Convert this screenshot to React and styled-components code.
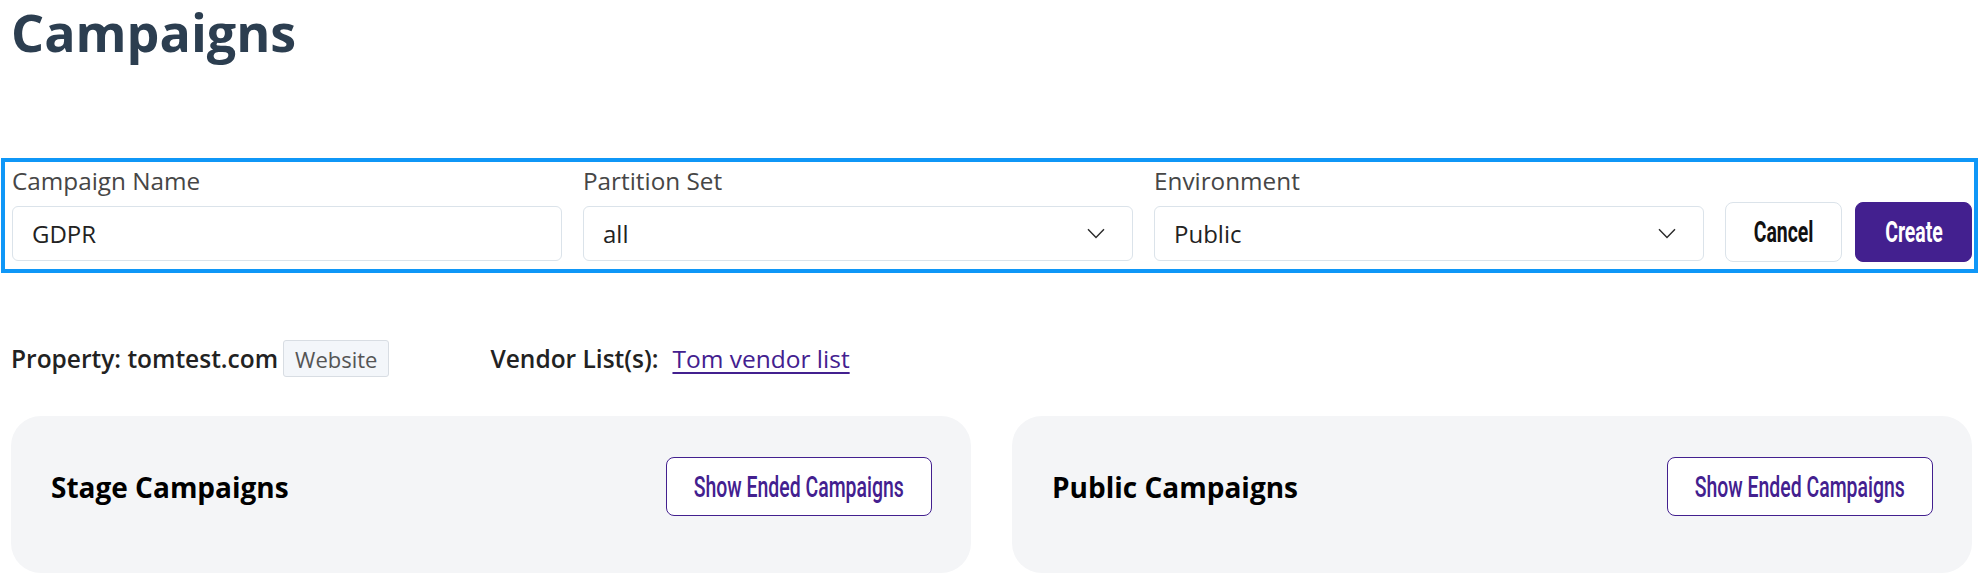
import React from 'react'
import styled, { createGlobalStyle } from 'styled-components'

const purple = '#43208f'
const condensed = `"Roboto", "Liberation Sans", sans-serif`

const GlobalStyle = createGlobalStyle`
    html, body {
        margin: 0;
        padding: 0;
        background: #fff;
        font-family: "Open Sans", "Noto Sans", sans-serif;
        color: #222;
    }
    * { box-sizing: border-box; }
`

const Page = styled.div`
    padding: 0 11px;
    width: 1983px;
`

const Title = styled.h1`
    margin: 0;
    font-size: 52px;
    line-height: 64px;
    font-weight: 700;
    color: #2c3e50;
`

const FormRow = styled.div`
    display: flex;
    align-items: flex-end;
    gap: 21px;
    margin: 94px -6px 0 -10px;
    padding: 2px 2px 8px 7px;
    border: 4px solid #0f97f7;
`

const Field = styled.label`
    flex: 1;
    display: flex;
    flex-direction: column;
    gap: 8px;
    min-width: 0;
`

const FieldLabel = styled.span`
    font-size: 24.3px;
    line-height: 34px;
    color: #464646;
`

const Box = styled.div`
    height: 55px;
    display: flex;
    align-items: center;
    justify-content: space-between;
    padding: 0 27px 0 19px;
    border: 1px solid #dbe3ea;
    border-radius: 6px;
    font-size: 24px;
    color: #222;
    background: #fff;
`

const Chevron = () => (
    <svg width="18" height="11" viewBox="0 0 18 11" fill="none">
        <path d="M1 1.2 L9 9.5 L17 1.2" stroke="#2a2a2a" strokeWidth="1.4" />
    </svg>
)

const Actions = styled.div`
    display: flex;
    gap: 13px;
    margin-bottom: -1px;
`

// squeezed text stands in for the condensed face of the original
const Squeeze = styled.span`
    display: inline-block;
    transform: scaleX(0.67);
    white-space: nowrap;
`

const Button = styled.button`
    width: 117px;
    height: 60px;
    display: flex;
    align-items: center;
    justify-content: center;
    padding: 0;
    border-radius: 8px;
    border: 1px solid ${p => (p.primary ? purple : '#dbe3ea')};
    background: ${p => (p.primary ? purple : '#fff')};
    color: ${p => (p.primary ? '#fff' : '#111')};
    font-family: ${condensed};
    font-weight: 700;
    font-size: 29px;
    cursor: pointer;
`

const InfoRow = styled.div`
    display: flex;
    align-items: center;
    margin-top: 67px;
    height: 37px;
    font-size: 24.5px;
    line-height: 34px;
`

const Strong = styled.span`
    font-weight: 600;
    color: #222;
`

const Badge = styled.span`
    display: inline-flex;
    align-items: center;
    height: 37px;
    margin: 0 101px 0 5px;
    padding: 0 11px;
    background: #f3f6fa;
    border: 1px solid #d8dde3;
    border-radius: 3px;
    font-size: 22px;
    color: #555;
`

const VendorLink = styled.a`
    margin-left: 14px;
    color: ${purple};
    text-decoration: underline;
    text-underline-offset: 4px;
`

const Cards = styled.div`
    display: grid;
    grid-template-columns: 1fr 1fr;
    gap: 41px;
    margin-top: 39px;
`

const Card = styled.section`
    display: flex;
    align-items: center;
    justify-content: space-between;
    padding: 41px 39px 57px 40px;
    background: #f4f5f7;
    border-radius: 30px;
`

const CardTitle = styled.h2`
    margin: 0;
    font-size: 28px;
    font-weight: 700;
    color: #000;
`

const OutlineButton = styled.button`
    width: 266px;
    height: 59px;
    display: flex;
    align-items: center;
    justify-content: center;
    padding: 0;
    background: #fff;
    border: 1px solid ${purple};
    border-radius: 8px;
    color: ${purple};
    font-family: ${condensed};
    font-weight: 500;
    font-size: 29px;
    cursor: pointer;
`

const App = () => (
    <Page>
        <GlobalStyle />
        <Title>Campaigns</Title>

        <FormRow>
            <Field>
                <FieldLabel>Campaign Name</FieldLabel>
                <Box>GDPR</Box>
            </Field>
            <Field>
                <FieldLabel>Partition Set</FieldLabel>
                <Box>all<Chevron /></Box>
            </Field>
            <Field>
                <FieldLabel>Environment</FieldLabel>
                <Box>Public<Chevron /></Box>
            </Field>
            <Actions>
                <Button><Squeeze>Cancel</Squeeze></Button>
                <Button primary><Squeeze>Create</Squeeze></Button>
            </Actions>
        </FormRow>

        <InfoRow>
            <Strong>Property: tomtest.com</Strong>
            <Badge>Website</Badge>
            <Strong>Vendor List(s):</Strong>
            <VendorLink href="#">Tom vendor list</VendorLink>
        </InfoRow>

        <Cards>
            <Card>
                <CardTitle>Stage Campaigns</CardTitle>
                <OutlineButton><Squeeze>Show Ended Campaigns</Squeeze></OutlineButton>
            </Card>
            <Card>
                <CardTitle>Public Campaigns</CardTitle>
                <OutlineButton><Squeeze>Show Ended Campaigns</Squeeze></OutlineButton>
            </Card>
        </Cards>
    </Page>
)

export default App
